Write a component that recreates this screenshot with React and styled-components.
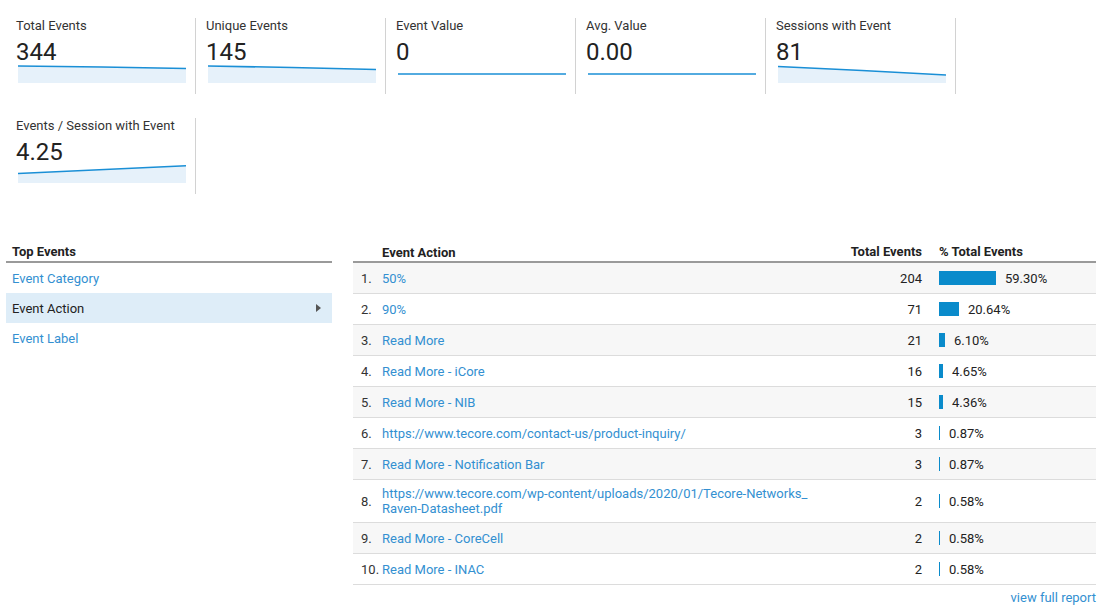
import React from "react";
import styled, { createGlobalStyle } from "styled-components";

const GlobalStyle = createGlobalStyle`
  html, body { margin: 0; padding: 0; background: #fff; }
  body {
    font-family: Roboto, "Liberation Sans", Arial, sans-serif;
    color: #222;
    font-size: 13px;
  }
  * { box-sizing: border-box; }
`;

const LINK = "#3390d1";
const LINE = "#1a8fd6";
const FILL = "#e6f1fa";
const BAR = "#0a8bcb";

const Page = styled.div`
  padding: 18px 6px 0;
  width: 1102px;
`;

const TileGrid = styled.div`
  display: grid;
  grid-template-columns: repeat(5, 190px);
  row-gap: 24px;
`;

const Tile = styled.div`
  height: 76px;
  border-right: 1px solid #d2d2d2;
  padding-left: 10px;
  display: flex;
  flex-direction: column;
`;

const TileTitle = styled.div`
  font-size: 13px;
  line-height: 16px;
  color: #333;
  white-space: nowrap;
`;

const TileValue = styled.div`
  font-size: 24px;
  line-height: 28px;
  margin-top: 3px;
  padding-top: 1px;
  height: 28px;
  color: #222;
`;

const Spark = styled.svg`
  display: block;
  margin-left: 2px;
`;

const Bottom = styled.div`
  display: flex;
  gap: 21px;
  margin-top: 46px;
`;

const Side = styled.div`
  width: 326px;
  flex: none;
`;

const SideHeader = styled.div`
  font-weight: 700;
  line-height: 16px;
  padding: 4px 6px 1px;
  border-bottom: 2px solid #9a9a9a;
  color: #222;
`;

const SideItem = styled.div`
  display: flex;
  align-items: center;
  justify-content: space-between;
  height: 30px;
  padding: 0 11px 0 6px;
  color: ${(p) => (p.$active ? "#222" : LINK)};
  background: ${(p) => (p.$active ? "#deedf8" : "transparent")};
`;

const Report = styled.div`
  flex: 1;
  min-width: 0;
`;

const Row = styled.div`
  display: grid;
  grid-template-columns: 29px 440px 100px 1fr;
  align-items: center;
  min-height: 31px;
  background: ${(p) => (p.$alt ? "#f7f7f7" : "#fff")};
  border-bottom: 1px solid #dcdcdc;
`;

const HeadRow = styled(Row)`
  min-height: 0;
  font-weight: 700;
  line-height: 16px;
  padding: 4px 0 1px;
  border-bottom: 2px solid #9a9a9a;
  background: #fff;
`;

const Rank = styled.div`
  padding-left: 8px;
  color: #333;
  white-space: nowrap;
`;

const Action = styled.div`
  color: ${(p) => (p.$head ? "#222" : LINK)};
  line-height: 15px;
  padding: ${(p) => (p.$head ? "0" : "6px 0")};
`;

const Num = styled.div`
  text-align: right;
`;

const PctCell = styled.div`
  display: flex;
  align-items: center;
  gap: 9px;
  padding-left: 17px;
  white-space: nowrap;
`;

const Bar = styled.div`
  height: 14px;
  background: ${BAR};
  flex: none;
`;

const Footer = styled.div`
  text-align: right;
  color: ${LINK};
  line-height: 16px;
  margin-top: 5px;
`;

const metrics = [
  { title: "Total Events", value: "344", pts: [[0, 1], [84, 2], [168, 3.5]], fill: true },
  { title: "Unique Events", value: "145", pts: [[0, 1], [84, 2.5], [168, 4.5]], fill: true },
  { title: "Event Value", value: "0", pts: [[0, 9], [168, 9]], fill: false },
  { title: "Avg. Value", value: "0.00", pts: [[0, 9], [168, 9]], fill: false },
  { title: "Sessions with Event", value: "81", pts: [[0, 1.5], [84, 5.5], [168, 10]], fill: true },
  { title: "Events / Session with Event", value: "4.25", pts: [[0, 8.5], [168, 0.8]], fill: true },
];

const rows = [
  ["50%", 204, 59.3],
  ["90%", 71, 20.64],
  ["Read More", 21, 6.1],
  ["Read More - iCore", 16, 4.65],
  ["Read More - NIB", 15, 4.36],
  ["https://www.tecore.com/contact-us/product-inquiry/", 3, 0.87],
  ["Read More - Notification Bar", 3, 0.87],
  [["https://www.tecore.com/wp-content/uploads/2020/01/Tecore-Networks_", "Raven-Datasheet.pdf"], 2, 0.58],
  ["Read More - CoreCell", 2, 0.58],
  ["Read More - INAC", 2, 0.58],
];

function Sparkline({ pts, fill }) {
  const line = pts.map((p) => p.join(",")).join(" ");
  const area = `${line} 168,18 0,18`;
  return (
    <Spark width="168" height="18" viewBox="0 0 168 18">
      {fill && <polygon points={area} fill={FILL} />}
      <polyline points={line} fill="none" stroke={LINE} strokeWidth="1.6" />
    </Spark>
  );
}

export default function App() {
  return (
    <Page>
      <GlobalStyle />
      <TileGrid>
        {metrics.map((m) => (
          <Tile key={m.title}>
            <TileTitle>{m.title}</TileTitle>
            <TileValue>{m.value}</TileValue>
            <Sparkline pts={m.pts} fill={m.fill} />
          </Tile>
        ))}
      </TileGrid>
      <Bottom>
        <Side>
          <SideHeader>Top Events</SideHeader>
          <SideItem>Event Category</SideItem>
          <SideItem $active>
            Event Action
            <svg width="5" height="8" viewBox="0 0 5 8">
              <polygon points="0,0 5,4 0,8" fill="#555" />
            </svg>
          </SideItem>
          <SideItem>Event Label</SideItem>
        </Side>
        <Report>
          <HeadRow>
            <Rank />
            <Action $head>Event Action</Action>
            <Num>Total Events</Num>
            <PctCell>% Total Events</PctCell>
          </HeadRow>
          {rows.map(([label, total, pct], i) => (
            <Row key={i} $alt={i % 2 === 0}>
              <Rank>{i + 1}.</Rank>
              <Action>
                {Array.isArray(label) ? (
                  <>
                    {label[0]}
                    <br />
                    {label[1]}
                  </>
                ) : (
                  label
                )}
              </Action>
              <Num>{total}</Num>
              <PctCell>
                <Bar style={{ width: Math.max(1, Math.round(pct * 0.965)) }} />
                {pct.toFixed(2)}%
              </PctCell>
            </Row>
          ))}
          <Footer>view full report</Footer>
        </Report>
      </Bottom>
    </Page>
  );
}
